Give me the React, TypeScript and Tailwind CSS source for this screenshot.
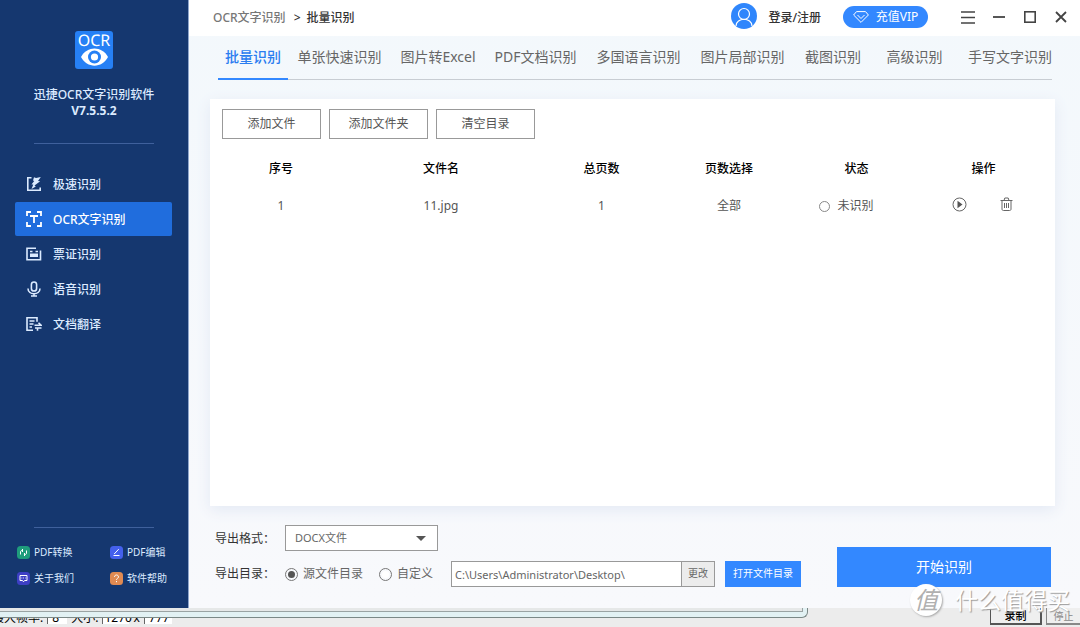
import { useState } from 'react';
import type { ReactNode } from 'react';

const tabs = [
  '批量识别',
  '单张快速识别',
  '图片转Excel',
  'PDF文档识别',
  '多国语言识别',
  '图片局部识别',
  '截图识别',
  '高级识别',
  '手写文字识别',
];

const menuItems: { label: string; icon: ReactNode }[] = [
  {
    label: '极速识别',
    icon: (
      <>
        <path d="M5.500 1.800H1.800v12.400h12.400V11.500" />
        <path d="M8 1.200l2 .8 4.800-1L12 5l2.200.2L8.500 9.500l1.300 1L5.500 13l1.800-4.500H5.500L8.200 5 7 4.500z" fill="currentColor" stroke="none" />
      </>
    ),
  },
  {
    label: 'OCR文字识别',
    icon: (
      <path d="M5 1H1v4M11 1h4v4M5 15H1v-4M11 15h4v-4M4 5h8M8 5v7" strokeWidth="1.800" />
    ),
  },
  {
    label: '票证识别',
    icon: (
      <>
        <path d="M10 2.200H1v11.600h13.500V4.500" />
        <path d="M4 5.500h2.500M9.500 5.500H12" strokeWidth="1.500" />
        <path d="M4 7.500h8v3.500H4z" fill="currentColor" stroke="none" />
      </>
    ),
  },
  {
    label: '语音识别',
    icon: (
      <>
        <rect x="5.400" y="1" width="5.200" height="9" rx="2.600" />
        <path d="M2 7.500c0 7 12 7 12 0M8 12.800v2M5 15h6" />
      </>
    ),
  },
  {
    label: '文档翻译',
    icon: (
      <>
        <path d="M7 14.200H1V1.800h10v4M3.500 5H8.500M3.500 8h4M3.500 11H6" />
        <path d="M8.500 9.200H15l-2.500-2.500M15.500 12H9M11.500 14.800V12" />
      </>
    ),
  },
];

const shortcuts: { label: string; tile: string; icon: ReactNode }[] = [
  {
    label: 'PDF转换',
    tile: 'fill-[#1f9c7c]',
    icon: <path d="M3.500 8.500V6c0-1 .5-1.500 2-1.500M5.500 3v3M9.500 4.500V7c0 1-.5 1.500-2 1.500M7.500 7v3" />,
  },
  {
    label: 'PDF编辑',
    tile: 'fill-[#4460ec]',
    icon: <path d="M4.200 8 8.700 3.200M3.500 9.500h6" />,
  },
  {
    label: '关于我们',
    tile: 'fill-[#3d3fc4]',
    icon: <path d="M3 3.500h7v5H7.500L6.500 9.800 5.500 8.500H3zM4.500 6h.8M6.200 6H7M8 6h.6" />,
  },
  {
    label: '软件帮助',
    tile: 'fill-[#e08a52]',
    icon: <path d="M4.500 5c0-2.700 4-2.700 4 0 0 1.400-2 1.300-2 2.800M6.500 9v1.200" />,
  },
];

function Logo() {
  return (
    <svg className="-ml-px h-[38px] w-[38px] overflow-visible" viewBox="0 0 38 38" role="img" aria-label="OCR">
      <rect width="38" height="38" rx="3" fill="#2680f5" />
      <text x="19" y="15" textAnchor="middle" fontSize="16" fill="#fff" textRendering="geometricPrecision">
        OCR
      </text>
      <path d="M6 26C12 14.500 27 14.500 33 26 27 37.500 12 37.500 6 26z" fill="#fff" />
      <circle cx="19.500" cy="26" r="6.500" fill="#2680f5" />
      <circle cx="19.500" cy="26" r="3.600" fill="#fff" />
    </svg>
  );
}

function Sidebar() {
  const [active, setActive] = useState('OCR文字识别');

  return (
    <aside className="flex w-[189px] shrink-0 flex-col border-r border-[#8fa6cc] bg-[#15376f] text-[#dcebff]">
      <div className="mx-[34px] flex flex-col items-center border-b border-[#3f609c] pt-[31px] pb-6">
        <Logo />
        <h1 className="mt-[18px] text-center text-xs font-medium whitespace-nowrap">
          迅捷OCR文字识别软件
          <br />
          <span className="font-bold">V7.5.5.2</span>
        </h1>
      </div>

      <nav className="mt-[23px] flex flex-col gap-px pr-4 pl-[15px]">
        {menuItems.map((item) => (
          <button
            key={item.label}
            onClick={() => setActive(item.label)}
            className={`flex h-[34px] items-center gap-[11px] rounded-xs pl-[11px] text-xs font-medium ${
              active === item.label ? 'bg-[#206ddd] font-bold text-white' : ''
            }`}
          >
            <svg className="h-4 w-4" viewBox="0 0 16 16" fill="none" stroke="currentColor" strokeWidth="1.600">
              {item.icon}
            </svg>
            <span className="pt-px">{item.label}</span>
          </button>
        ))}
      </nav>

      <div className="mx-[34px] mt-auto border-t border-[#3f609c]" />
      <div className="grid grid-cols-[93px_1fr] gap-y-[10px] pt-4 pb-[22px] pl-[17px]">
        {shortcuts.map((item) => (
          <a key={item.label} href="#" className="flex items-center gap-1 text-[10px] leading-4 whitespace-nowrap">
            <svg className="h-[13px] w-[13px]" viewBox="0 0 13 13" fill="none" stroke="#fff">
              <rect width="13" height="13" rx="3.500" className={item.tile} stroke="none" />
              {item.icon}
            </svg>
            {item.label}
          </a>
        ))}
      </div>
    </aside>
  );
}

function TitleBar() {
  return (
    <header className="flex h-9 shrink-0 items-center bg-white pr-3 pl-6 text-xs text-[#333]">
      <div className="flex items-center gap-2 font-medium">
        <span className="text-[#777]">OCR文字识别</span>
        <span>&gt;</span>
        <span className="-ml-0.5">批量识别</span>
      </div>

      <button className="ml-auto flex items-center gap-[11px] pb-1 font-medium">
        <svg className="h-[26px] w-[26px]" viewBox="0 0 26 26" fill="none" stroke="#fff" strokeWidth="1.200">
          <circle cx="13" cy="13" r="13" fill="#2f86fc" stroke="none" />
          <circle cx="13" cy="11" r="5.500" />
          <path d="M5 23c0-9 16-9 16 0" />
        </svg>
        <span className="pt-1">登录/注册</span>
      </button>
      <div className="flex items-center pb-0.5">
        <button className="ml-[22px] flex h-[22px] w-[85px] items-center justify-center gap-[7px] rounded-full bg-[#3388ff] text-white">
          <svg className="h-3 w-4" viewBox="0 0 16 12" fill="none" stroke="currentColor">
            <path d="M3.500.6h9L15.400 4 8 11.400.6 4zM4.500 4 8 7.500 11.500 4" />
          </svg>
          充值VIP
        </button>

        <div className="ml-8 flex items-center gap-4 text-[#444]">
          <button aria-label="菜单">
            <svg className="block h-4 w-4" viewBox="0 0 16 16" stroke="currentColor" strokeWidth="1.600">
              <path d="M1 3h14M1 8.500h14M1 14h14" />
            </svg>
          </button>
          <button aria-label="最小化">
            <svg className="block h-4 w-[14px]" viewBox="0 0 14 16" stroke="currentColor" strokeWidth="1.800">
              <path d="M1 8h12" />
            </svg>
          </button>
          <button aria-label="最大化">
            <svg className="block h-4 w-4" viewBox="0 0 16 16" fill="none" stroke="currentColor" strokeWidth="1.600">
              <rect x="2.800" y="2.800" width="10.400" height="10.400" />
            </svg>
          </button>
          <button aria-label="关闭">
            <svg className="block h-4 w-[14px]" viewBox="0 0 14 16" stroke="currentColor" strokeWidth="1.800">
              <path d="M2 3l10 10M12 3L2 13" />
            </svg>
          </button>
        </div>
      </div>
    </header>
  );
}

function Tabs() {
  const [current, setCurrent] = useState('批量识别');

  return (
    <nav className="mr-7 ml-[29px] grid h-11 shrink-0 grid-cols-[70fr_103fr_94fr_101fr_105fr_103fr_78fr_85fr_95fr] border-b border-[#c8cdd3] text-sm text-[#666]">
      {tabs.map((tab) => (
        <button
          key={tab}
          onClick={() => setCurrent(tab)}
          className={`-mb-px border-b-2 text-center whitespace-nowrap last:text-right ${
            current === tab ? 'border-[#3388ff] font-medium text-[#2b7df0]' : 'border-transparent'
          }`}
        >
          {tab}
        </button>
      ))}
    </nav>
  );
}

function FileTable() {
  return (
    <table className="mt-[18px] w-full table-fixed text-center text-xs text-[#555]">
      <thead className="text-black">
        <tr className="h-6">
          <th className="w-[118px] font-medium">序号</th>
          <th className="w-[202px] font-medium">文件名</th>
          <th className="w-[119px] font-medium">总页数</th>
          <th className="w-[136px] font-medium">页数选择</th>
          <th className="w-[119px] font-medium">状态</th>
          <th className="w-[135px] font-medium">操作</th>
        </tr>
      </thead>
      <tbody>
        <tr className="h-[50px]">
          <td>1</td>
          <td>11.jpg</td>
          <td>1</td>
          <td>全部</td>
          <td>
            <div className="flex items-center justify-center gap-[7px] pr-5">
              <span className="h-[11px] w-[11px] rounded-full border border-[#888]" />
              未识别
            </div>
          </td>
          <td>
            <div className="flex items-center justify-center gap-[33px] pr-[3px] pb-[3px]">
              <button aria-label="开始">
                <svg className="block h-[15px] w-[15px]" viewBox="0 0 15 15" fill="none" stroke="#666">
                  <circle cx="7.500" cy="7.500" r="6.500" />
                  <path d="M5.500 3.800v7.400l5-3.700z" fill="#555" stroke="none" />
                </svg>
              </button>
              <button aria-label="删除">
                <svg className="block h-[15px] w-[13px]" viewBox="0 0 13 15" fill="none" stroke="#666">
                  <path d="M.5 3.500h12M4 3.500l.8-2.500h3.400L9 3.500M2 3.500V12c0 1 .5 1.500 1.500 1.500h6c1 0 1.500-.5 1.500-1.500V3.500M4.500 6v5M6.500 6v5M8.500 6v5" />
                </svg>
              </button>
            </div>
          </td>
        </tr>
      </tbody>
    </table>
  );
}

function ExportOptions() {
  const radio =
    'h-[13px] w-[13px] appearance-none rounded-full border border-[#777] bg-white bg-clip-content p-[2px] checked:bg-[#555]';

  return (
    <div className="flex flex-col gap-[10px] text-xs text-[#333]">
      <div className="flex h-[26px] items-center">
        <label htmlFor="format" className="w-[70px] pt-px whitespace-nowrap">
          导出格式：
        </label>
        <div className="relative">
          <select
            id="format"
            className="block h-[26px] w-[153px] appearance-none border border-[#999] bg-white pl-[9px] text-[11px] text-[#666]"
          >
            <option>DOCX文件</option>
            <option>TXT文件</option>
          </select>
          <svg className="pointer-events-none absolute top-[11px] right-3 h-[5px] w-[10px] fill-[#555]" viewBox="0 0 10 5">
            <path d="M0 0h10L5 5z" />
          </svg>
        </div>
      </div>

      <div className="flex h-[26px] items-center text-[#666]">
        <span className="w-[70px] whitespace-nowrap text-[#333]">导出目录：</span>
        <label className="flex items-center gap-[5px] whitespace-nowrap">
          <input type="radio" name="dir" defaultChecked className={radio} />
          源文件目录
        </label>
        <label className="ml-4 flex items-center gap-[5px] whitespace-nowrap">
          <input type="radio" name="dir" className={radio} />
          自定义
        </label>
        <input
          aria-label="导出目录"
          defaultValue="C:\Users\Administrator\Desktop\"
          className="ml-[18px] h-[26px] w-[231px] border border-[#999] bg-white pl-[3px] text-[11px]"
        />
        <button className="-ml-px h-[26px] w-[34px] border border-[#999] bg-[#ececec] text-[10px]">更改</button>
        <button className="ml-[10px] h-[26px] w-[76px] bg-[#3388ff] text-[10px] whitespace-nowrap text-white">
          打开文件目录
        </button>
      </div>
    </div>
  );
}

// Slice of the recorder window that sits behind the app
function RecorderStrip() {
  return (
    <footer className="flex h-[19px] shrink-0 overflow-hidden bg-[#ececec] text-black">
      <div className="w-3/4">
        <div className="mr-[2px] h-[10px] rounded-br-md border-r border-b border-[#7b8886] bg-[#e2f1f3]">
          <div className="mr-1 h-1 border-r border-b border-[#9aa3a3] bg-[#e6e8e8]" />
        </div>
        <div className="flex h-[6px] items-end gap-1 overflow-hidden text-xs leading-3 whitespace-nowrap">
          <span className="-ml-2">最大帧率:</span>
          <span className="w-5 border-l border-[#666] bg-white pl-1">8</span>
          <span>大小:</span>
          <span className="w-[27px] border-l border-[#666] bg-white pl-px">1270</span>
          <span>x</span>
          <span className="w-7 border-l border-[#666] bg-white pl-1">777</span>
        </div>
      </div>
      <div className="flex flex-1 items-start justify-end gap-1 pl-4">
        <button className="h-[17px] w-[52px] shrink-0 border-r-2 border-b-2 border-l border-[#555] bg-[#efefef] text-[11px] leading-4 font-medium">
          录制
        </button>
        <button className="h-[17px] w-[34px] shrink-0 border-b-2 border-l border-[#888] bg-[#efefef] text-[10px] leading-4 text-[#888]">
          停止
        </button>
      </div>
    </footer>
  );
}

function Watermark() {
  return (
    <div className="pointer-events-none absolute right-[10px] bottom-[11px] flex items-center gap-[13px] whitespace-nowrap">
      <span className="flex h-8 w-8 items-center justify-center rounded-full bg-white text-2xl text-[#b0b0b0] italic shadow-[1px_1px_2px_#aaa]">
        值
      </span>
      <span className="text-[23px] leading-8 text-white [text-shadow:1px_1px_1px_#999]">什么值得买</span>
    </div>
  );
}

export default function App() {
  return (
    <div className="relative flex h-screen flex-col overflow-hidden font-['Noto_Sans','Noto_Sans_CJK_SC',sans-serif]">
      <div className="flex min-h-0 flex-1">
        <Sidebar />
        <div className="flex min-w-0 flex-1 flex-col bg-linear-to-b from-[#f3f8fc] to-[#f8f9fc]">
          <TitleBar />
          <Tabs />
          <main className="flex flex-1 flex-col pr-[25px] pl-[21px]">
            <section className="mt-[19px] flex-1 bg-white pt-[10px] pr-1 pl-3 shadow-[0_4px_14px_#e3e9f4]">
              <div className="flex gap-2 text-xs text-[#555]">
                <button className="h-[30px] w-[99px] border border-[#999]">添加文件</button>
                <button className="h-[30px] w-[99px] border border-[#999]">添加文件夹</button>
                <button className="h-[30px] w-[99px] border border-[#999]">清空目录</button>
              </div>
              <FileTable />
            </section>
            <div className="flex items-end justify-between pt-[19px] pr-1 pb-[21px] pl-[5px]">
              <ExportOptions />
              <button className="h-10 w-[214px] bg-[#3388ff] text-sm text-white">开始识别</button>
            </div>
          </main>
        </div>
      </div>
      <RecorderStrip />
      <Watermark />
    </div>
  );
}
